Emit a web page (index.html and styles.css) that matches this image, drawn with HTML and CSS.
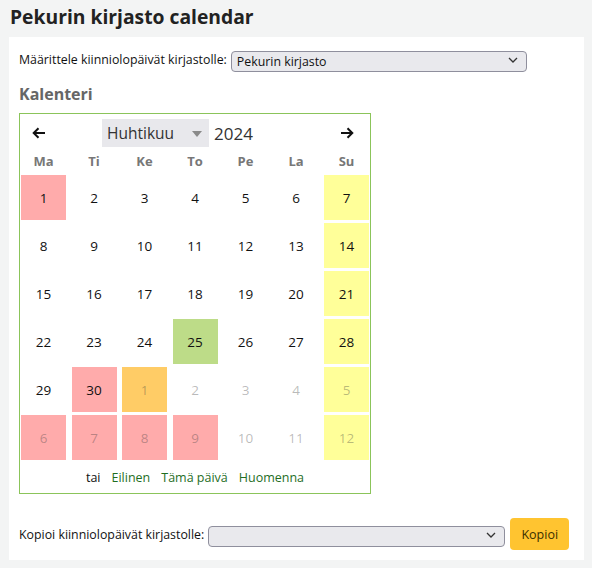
FILE: index.html
```html
<!DOCTYPE html>
<html lang="fi">
<head>
<meta charset="utf-8">
<title>Pekurin kirjasto calendar</title>
<link rel="stylesheet" href="styles.css">
</head>
<body>
<h1 class="title">Pekurin kirjasto calendar</h1>
<div class="panel">
  <div class="field-row">
    <label class="field-label" for="lib">Määrittele kiinniolopäivät kirjastolle:</label>
    <div class="select-wrap select-top">
      <select id="lib" class="select"><option>Pekurin kirjasto</option></select>
      <svg class="chev" width="10" height="6" viewBox="0 0 10 6"><path d="M1 1l4 4 4-4" fill="none" stroke="#333" stroke-width="1.3"/></svg>
    </div>
  </div>
  <h2 class="section-title">Kalenteri</h2>
  <div class="calendar">
    <div class="cal-head">
      <span class="nav-arrow">
        <svg width="14" height="12" viewBox="0 0 14 12"><path d="M13 6H2M6.5 1.2L1.7 6l4.8 4.8" fill="none" stroke="#111" stroke-width="2"/></svg>
      </span>
      <div class="month-pick">
        <span class="month-name">Huhtikuu</span>
        <svg class="month-caret" width="10" height="6" viewBox="0 0 10 6"><path d="M0 0h10L5 6z" fill="#8a8a8a"/></svg>
      </div>
      <span class="year">2024</span>
      <span class="spacer"></span>
      <span class="nav-arrow">
        <svg width="14" height="12" viewBox="0 0 14 12"><path d="M1 6h11M7.5 1.2L12.3 6l-4.8 4.8" fill="none" stroke="#111" stroke-width="2"/></svg>
      </span>
    </div>
    <div class="weekdays">
      <span>Ma</span><span>Ti</span><span>Ke</span><span>To</span><span>Pe</span><span>La</span><span>Su</span>
    </div>
    <div class="days">
      <span class="day closed">1</span><span class="day">2</span><span class="day">3</span><span class="day">4</span><span class="day">5</span><span class="day">6</span><span class="day sunday">7</span>
      <span class="day">8</span><span class="day">9</span><span class="day">10</span><span class="day">11</span><span class="day">12</span><span class="day">13</span><span class="day sunday">14</span>
      <span class="day">15</span><span class="day">16</span><span class="day">17</span><span class="day">18</span><span class="day">19</span><span class="day">20</span><span class="day sunday">21</span>
      <span class="day">22</span><span class="day">23</span><span class="day">24</span><span class="day today">25</span><span class="day">26</span><span class="day">27</span><span class="day sunday">28</span>
      <span class="day">29</span><span class="day closed">30</span><span class="day other special">1</span><span class="day other">2</span><span class="day other">3</span><span class="day other">4</span><span class="day other sunday">5</span>
      <span class="day other closed">6</span><span class="day other closed">7</span><span class="day other closed">8</span><span class="day other closed">9</span><span class="day other">10</span><span class="day other">11</span><span class="day other sunday">12</span>
    </div>
    <div class="cal-foot">
      <span class="or">tai</span>
      <a class="quick" href="#">Eilinen</a>
      <a class="quick" href="#">Tämä päivä</a>
      <a class="quick" href="#">Huomenna</a>
    </div>
  </div>
  <div class="field-row copy-row">
    <label class="field-label" for="copy">Kopioi kiinniolopäivät kirjastolle:</label>
    <div class="select-wrap select-copy">
      <select id="copy" class="select"><option></option></select>
      <svg class="chev" width="10" height="6" viewBox="0 0 10 6"><path d="M1 1l4 4 4-4" fill="none" stroke="#333" stroke-width="1.3"/></svg>
    </div>
    <button class="btn-copy" type="button">Kopioi</button>
  </div>
</div>
</body>
</html>
```

FILE: styles.css
```css
html, body {
  margin: 0;
  padding: 0;
}
body {
  background: #f3f4f4;
  font-family: "Open Sans", "Noto Sans", sans-serif;
  color: #111;
  width: 592px;
  height: 568px;
  overflow: hidden;
}
.title {
  margin: 0;
  padding: 3px 10px 6px;
  height: 28px;
  font-size: 19.3px;
  line-height: 28px;
  font-weight: 700;
  color: #222;
}
.panel {
  margin: 0 8px 0 9px;
  background: #fff;
  padding: 12px 10px 10px;
  height: 501px;
}
.field-row {
  display: flex;
  align-items: center;
  height: 21px;
}
.field-label {
  font-size: 12.35px;
  color: #111;
  margin-right: 4px;
  white-space: nowrap;
}
.select-wrap {
  position: relative;
  height: 21px;
}
.select-top { width: 296px; }
.select-copy { width: 297px; }
.select {
  appearance: none;
  -webkit-appearance: none;
  width: 100%;
  height: 21px;
  box-sizing: border-box;
  margin: 0;
  padding: 0 20px 0 5px;
  background: #e9e9ed;
  border: 1px solid #8f8f9d;
  border-radius: 4px;
  font-family: "Open Sans", "Noto Sans", sans-serif;
  font-size: 12.35px;
  color: #111;
}
.chev {
  position: absolute;
  right: 9px;
  top: 8px;
  pointer-events: none;
}
.section-title {
  margin: 13px 0 8px;
  font-size: 16px;
  line-height: 22px;
  font-weight: 700;
  color: #666;
}
.calendar {
  width: 350px;
  border: 1px solid #8bc45a;
  box-sizing: content-box;
}
.cal-head {
  display: flex;
  align-items: center;
  height: 28px;
  margin-top: 5px;
  padding: 0 14px 0 12px;
}
.nav-arrow {
  display: flex;
  align-items: center;
  width: 16px;
  height: 28px;
}
.month-pick {
  display: flex;
  align-items: center;
  margin-left: 54px;
  width: 107px;
  height: 28px;
  box-sizing: border-box;
  padding-left: 5px;
  background: #e8e8ec;
}
.month-name {
  font-size: 15.5px;
  color: #333;
  width: 85px;
}
.month-caret { margin-top: 1px; }
.year {
  margin-left: 5px;
  font-size: 17px;
  color: #333;
}
.spacer { flex: 1; }
.weekdays {
  display: grid;
  grid-template-columns: repeat(7, 45px);
  justify-content: space-between;
  padding: 0 0 0 1px;
  width: 348px;
  height: 28px;
  line-height: 28px;
}
.weekdays span {
  text-align: center;
  font-size: 13px;
  font-weight: 700;
  color: #777;
}
.days {
  display: grid;
  grid-template-columns: repeat(7, 45px);
  grid-auto-rows: 45px;
  justify-content: space-between;
  row-gap: 3px;
  padding-left: 1px;
  width: 348px;
}
.day {
  display: flex;
  align-items: center;
  justify-content: center;
  font-size: 13.5px;
  color: #111;
}
.day.closed { background: #ffabab; }
.day.sunday { background: #ffff99; }
.day.today { background: #bddc88; }
.day.special { background: #ffcc66; }
.day.other { color: rgba(57, 57, 57, 0.35); }
.cal-foot {
  display: flex;
  justify-content: center;
  gap: 11px;
  padding: 8px 0 5px;
  line-height: 20px;
  font-size: 12.5px;
}
.or { color: #111; }
.quick {
  color: #1f6e1f;
  text-decoration: none;
}
.copy-row {
  margin-top: 24px;
  height: 32px;
}
.btn-copy {
  margin-left: 5px;
  width: 59px;
  height: 32px;
  border: none;
  border-radius: 4px;
  background: #ffc430;
  color: #3a2e00;
  font-family: "Open Sans", "Noto Sans", sans-serif;
  font-size: 12.5px;
  padding: 0;
}
```
